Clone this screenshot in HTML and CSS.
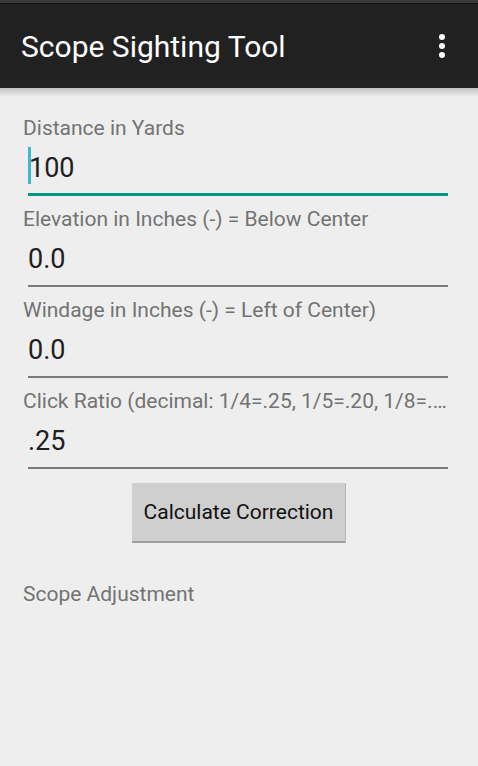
FILE: index.html
```html
<!DOCTYPE html>
<html lang="en">
<head>
<meta charset="utf-8">
<title>Scope Sighting Tool</title>
<link rel="stylesheet" href="styles.css">
</head>
<body>
<div class="app">
  <div class="status-strip"></div>
  <header class="action-bar">
    <h1 class="title">Scope Sighting Tool</h1>
    <svg class="overflow" width="6" height="24" viewBox="0 0 6 24" aria-hidden="true">
      <circle cx="3" cy="3" r="3" fill="#fff"/>
      <circle cx="3" cy="12" r="3" fill="#fff"/>
      <circle cx="3" cy="21" r="3" fill="#fff"/>
    </svg>
  </header>
  <div class="bar-shadow"></div>
  <main class="content">
    <div class="field">
      <div class="label">Distance in Yards</div>
      <div class="input focused"><span class="caret"></span>100</div>
    </div>
    <div class="field">
      <div class="label">Elevation in Inches (-) = Below Center</div>
      <div class="input">0.0</div>
    </div>
    <div class="field">
      <div class="label">Windage in Inches (-) = Left of Center)</div>
      <div class="input">0.0</div>
    </div>
    <div class="field">
      <div class="label">Click Ratio (decimal: 1/4=.25, 1/5=.20, 1/8=.125)</div>
      <div class="input">.25</div>
    </div>
    <div class="button-row">
      <button class="button" type="button">Calculate Correction</button>
    </div>
    <div class="label result">Scope Adjustment</div>
  </main>
</div>
</body>
</html>
```

FILE: styles.css
```css
html, body {
  margin: 0;
  padding: 0;
}
body {
  background: #eeeeee;
  font-family: Roboto, "Noto Sans", "Liberation Sans", sans-serif;
  width: 478px;
  height: 766px;
  overflow: hidden;
}
.app {
  display: flex;
  flex-direction: column;
  min-height: 766px;
}
.status-strip {
  height: 3px;
  background: #3b3b3b;
  border-bottom: 1px solid #141414;
}
.action-bar {
  height: 84px;
  background: #212121;
  display: flex;
  align-items: center;
  justify-content: space-between;
  padding: 0 33px 0 21px;
}
.title {
  margin: 0;
  padding-top: 2px;
  font-weight: 400;
  font-size: 30px;
  line-height: 36px;
  color: #ffffff;
}
.overflow {
  display: block;
}
.bar-shadow {
  height: 9px;
  background: linear-gradient(#c2c2c2, #eeeeee);
  margin-bottom: -9px;
  position: relative;
}
.content {
  padding: 26px 22px 0 22px;
  display: flex;
  flex-direction: column;
}
.field {
  display: flex;
  flex-direction: column;
  margin-bottom: 9px;
}
.label {
  font-size: 21px;
  line-height: 28px;
  color: #737373;
  white-space: nowrap;
  overflow: hidden;
  text-overflow: ellipsis;
  padding-left: 1px;
}
.input {
  margin: 0 8px 0 6px;
  height: 52px;
  font-size: 27px;
  line-height: 52px;
  color: #202020;
  border-bottom: 2px solid #7a7a7a;
}
.input.focused {
  border-bottom: 3px solid #009688;
  height: 51px;
}
.caret {
  display: inline-block;
  width: 3px;
  height: 37px;
  background: #3bb8d4;
  vertical-align: -7px;
  margin-right: -2px;
}
.button-row {
  display: flex;
  justify-content: center;
  margin-top: 5px;
}
.button {
  width: 214px;
  height: 60px;
  padding: 0;
  font-family: inherit;
  font-size: 21px;
  color: #111111;
  background: #cfcfcf;
  border: none;
  border-right: 1px solid #b5b5b5;
  border-bottom: 2px solid #9c9c9c;
  border-radius: 1px;
}
.result {
  margin-top: 37px;
}
```
